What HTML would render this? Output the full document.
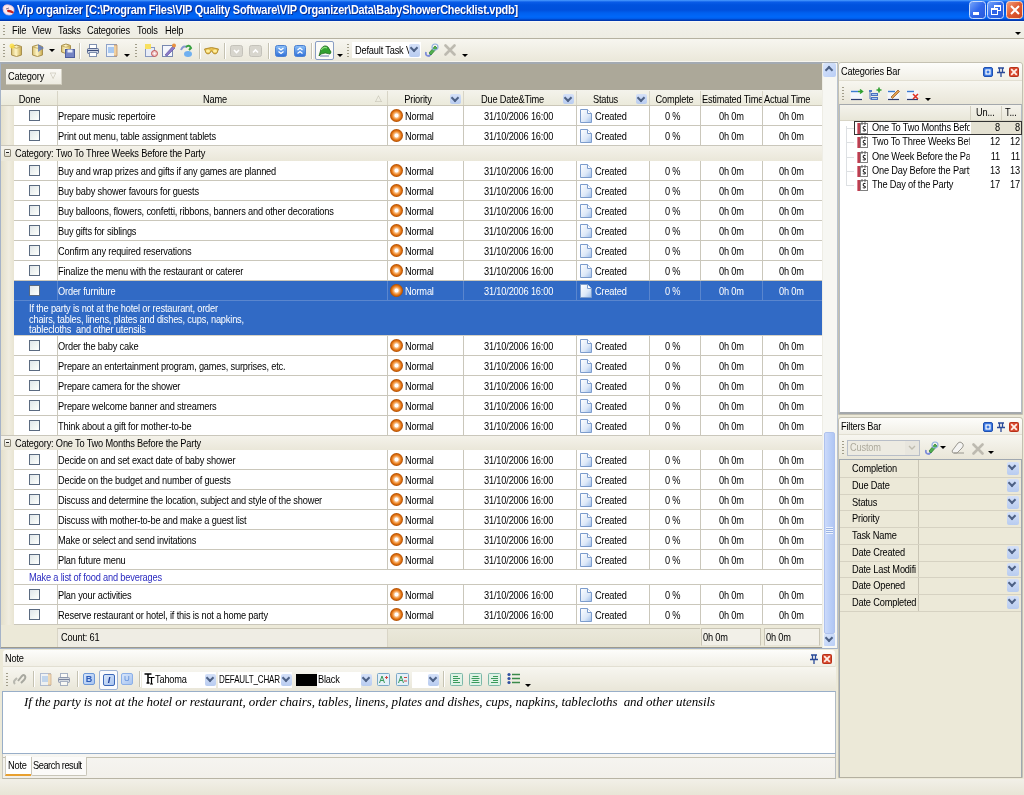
<!DOCTYPE html><html><head><meta charset="utf-8"><style>
*{margin:0;padding:0;box-sizing:border-box}
html,body{width:1024px;height:795px;overflow:hidden;background:#ECE9D8;font-family:"Liberation Sans",sans-serif;font-size:10px;color:#000}
.a{position:absolute}
.t{white-space:nowrap;letter-spacing:-0.2px;line-height:11px;font-size:10.5px;transform:scaleX(.88);transform-origin:0 0}
.grip{width:2px;background:repeating-linear-gradient(#A19D8A 0 1px,transparent 1px 3px)}
.sep{width:1px;background:#C5C2B2;border-right:1px solid #fff;width:2px}
.dd{width:0;height:0;border-left:3px solid transparent;border-right:3px solid transparent;border-top:3px solid #000}
.cb{width:11px;height:11px;border:1px solid #5A6A80;background:linear-gradient(135deg,#E0E6EA 0%,#F2F6F4 60%,#FFFFFF 100%)}
.pri{width:13px;height:13px;border-radius:50%;background:radial-gradient(circle at 50% 50%,#fff 0,#fff 1.6px,#F9C28E 2.4px,#EE8A2E 4px,#D4660A 5.2px,#A94A00 6.5px)}
.doc{width:11px;height:13px;background:linear-gradient(135deg,#FFFFFF 0%,#D6E4F7 50%,#A8C4EC 100%);border:1px solid #8CA8D8}
.hdd{width:11px;height:10px;background:linear-gradient(#D4E0F8,#B8CCF0);border-radius:2px}
.hdd:after{content:"";position:absolute;left:2px;top:1px;width:4px;height:4px;border-right:2px solid #4D6185;border-bottom:2px solid #4D6185;transform:rotate(45deg) }
.btn{border:1px solid #7F9DB9}
</style></head><body><div id="root" style="position:absolute;left:0;top:0;width:1024px;height:795px;will-change:transform">
<div class="a " style="left:0px;top:0px;width:1024px;height:21px;background:linear-gradient(#4A9CFF 0px,#2F7FF5 1px,#0A5CE8 2px,#0052DE 5px,#0050DC 10px,#0060F0 13px,#0068FA 17px,#005AE8 19px,#0038B0 20px,#0038B0 21px)"></div>
<svg class="a" style="left:1px;top:3px" width="15" height="14" viewBox="0 0 15 14"><path d="M2 5 Q3 1 8 2 Q13 3 13 7 Q13 12 8 12 Q2 12 2 5 Z" fill="#FBE8EE" stroke="#F0C0D0" stroke-width=".8"/><path d="M6 7 Q9 6 13 9 L12 10.5 Q9 9 6.5 9 Z" fill="#C02020"/><path d="M5 6 L8 5" stroke="#807090" stroke-width="1"/></svg>
<div class="a" style="left:17px;top:3px;color:#fff;font-weight:bold;font-size:12.5px;letter-spacing:-0.3px;transform:scaleX(.877);transform-origin:0 0;white-space:nowrap;text-shadow:1px 1px 0 #0A2A8A;line-height:14px">Vip organizer [C:\Program Files\VIP Quality Software\VIP Organizer\Data\BabyShowerChecklist.vpdb]</div>
<svg class="a" style="left:0px;top:0px" width="1" height="1" viewBox="0 0 1 1"><defs><linearGradient id="tbb" x1="0" y1="0" x2="1" y2="1"><stop offset="0" stop-color="#7AA8FA"/><stop offset=".5" stop-color="#3068EC"/><stop offset="1" stop-color="#2858D8"/></linearGradient><linearGradient id="tbr" x1="0" y1="0" x2="1" y2="1"><stop offset="0" stop-color="#F0A080"/><stop offset=".5" stop-color="#E05A30"/><stop offset="1" stop-color="#C84420"/></linearGradient></defs></svg>
<svg class="a" style="left:969px;top:1px" width="17" height="18" viewBox="0 0 17 18"><rect x=".5" y=".5" width="16" height="17" rx="3" fill="url(#tbb)" stroke="#C8DCFC"/><rect x="4" y="11" width="6" height="3" fill="#fff"/></svg>
<svg class="a" style="left:987px;top:1px" width="17" height="18" viewBox="0 0 17 18"><rect x=".5" y=".5" width="16" height="17" rx="3" fill="url(#tbb)" stroke="#C8DCFC"/><rect x="7.5" y="4.5" width="6" height="5" fill="none" stroke="#fff"/><rect x="7" y="4" width="7" height="2" fill="#fff"/><rect x="4.5" y="7.5" width="6" height="6" fill="#2E62E8" stroke="#fff"/><rect x="4" y="7" width="7" height="2" fill="#fff"/></svg>
<svg class="a" style="left:1006px;top:1px" width="17" height="18" viewBox="0 0 17 18"><rect x=".5" y=".5" width="16" height="17" rx="3" fill="url(#tbr)" stroke="#F8D8C8"/><path d="M5 5 L13 13 M13 5 L5 13" stroke="#fff" stroke-width="2"/></svg>
<div class="a " style="left:0px;top:21px;width:1024px;height:18px;background:linear-gradient(#FFFFFF 0px,#F2F1EA 1px,#EEEDE3 100%);border-bottom:1px solid #B5B1A0"></div>
<div class="a grip" style="left:3px;top:25px;width:2px;height:11px;"></div>
<div class="a t" style="left:12px;top:25px;">File</div>
<div class="a t" style="left:32px;top:25px;">View</div>
<div class="a t" style="left:58px;top:25px;">Tasks</div>
<div class="a t" style="left:87px;top:25px;">Categories</div>
<div class="a t" style="left:137px;top:25px;">Tools</div>
<div class="a t" style="left:165px;top:25px;">Help</div>
<div class="a dd" style="left:1015px;top:32px;width:0px;height:0px;"></div>
<div class="a " style="left:0px;top:39px;width:1024px;height:23px;background:linear-gradient(#F7F6F0,#EAE7D9)"></div>
<div class="a grip" style="left:3px;top:44px;width:2px;height:14px;"></div>
<svg class="a" style="left:0px;top:0px" width="1" height="1" viewBox="0 0 1 1"><defs><linearGradient id="dbg" x1="0" x2="1"><stop offset="0" stop-color="#D8C070"/><stop offset=".45" stop-color="#FFF6C8"/><stop offset="1" stop-color="#C8A848"/></linearGradient></defs></svg>
<svg class="a" style="left:11px;top:44px" width="12" height="14" viewBox="0 0 12 14"><path d="M0.5 2.5 Q5.5 -0.5 10.5 2.5 L10.5 11 Q5.5 14 0.5 11 Z" fill="url(#dbg)" stroke="#A89050" stroke-width="1"/><path d="M1 3 Q5.5 5.5 10 3" fill="none" stroke="#C8B068" stroke-width="1"/></svg>
<svg class="a" style="left:9px;top:43px" width="6" height="6" viewBox="0 0 6 6"><circle cx="3" cy="3" r="2.5" fill="#FFE040" opacity=".8"/></svg>
<svg class="a" style="left:32px;top:44px" width="12" height="14" viewBox="0 0 12 14"><path d="M0.5 2.5 Q5.5 -0.5 10.5 2.5 L10.5 11 Q5.5 14 0.5 11 Z" fill="url(#dbg)" stroke="#A89050" stroke-width="1"/><path d="M1 3 Q5.5 5.5 10 3" fill="none" stroke="#C8B068" stroke-width="1"/></svg>
<svg class="a" style="left:38px;top:44px" width="6" height="8" viewBox="0 0 6 8"><path d="M0 0 L6 4 L0 8 Z" fill="#5A78C0" opacity=".8"/></svg>
<div class="a dd" style="left:49px;top:49px;width:0px;height:0px;"></div>
<svg class="a" style="left:61px;top:43px" width="11" height="12" viewBox="0 0 11 12"><path d="M0.5 2.5 Q5.0 -0.5 9.5 2.5 L9.5 9 Q5.0 12 0.5 9 Z" fill="url(#dbg)" stroke="#A89050" stroke-width="1"/><path d="M1 3 Q5.0 5.5 9 3" fill="none" stroke="#C8B068" stroke-width="1"/></svg>
<svg class="a" style="left:65px;top:49px" width="10" height="9" viewBox="0 0 10 9"><rect x=".5" y=".5" width="9" height="8" fill="#7484C4" stroke="#4C5C9C"/><rect x="2.5" y="0.5" width="5" height="3" fill="#E8ECF8"/></svg>
<div class="a sep" style="left:79px;top:43px;width:2px;height:16px;"></div>
<svg class="a" style="left:87px;top:44px" width="12" height="13" viewBox="0 0 12 13"><rect x="2.5" y="0.5" width="7" height="4" fill="#fff" stroke="#8090B0"/><rect x="0.5" y="4.5" width="11" height="5" rx="1" fill="#C8D0E0" stroke="#5A6A90"/><rect x="2.5" y="8.5" width="7" height="4" fill="#fff" stroke="#8090B0"/><line x1="1" y1="6.5" x2="11" y2="6.5" stroke="#3A4A78"/></svg>
<svg class="a" style="left:106px;top:44px" width="12" height="13" viewBox="0 0 12 13"><rect x="0.5" y="0.5" width="10" height="12" fill="#EEF3FA" stroke="#8EA2C8"/><rect x="2" y="3" width="6" height="6" fill="#A8C8F0"/><path d="M8 1 L11 1 L11 12 L8 12" fill="#F0D0A0" stroke="#C09060" stroke-width=".8"/></svg>
<div class="a dd" style="left:124px;top:54px;width:0px;height:0px;"></div>
<div class="a grip" style="left:135px;top:44px;width:2px;height:14px;"></div>
<svg class="a" style="left:145px;top:44px" width="13" height="13" viewBox="0 0 13 13"><rect x="0.5" y="3.5" width="9" height="9" fill="#E8ECF6" stroke="#8898C0"/><rect x="0" y="0" width="6" height="5" fill="#F8E060"/><circle cx="9.5" cy="9.5" r="3" fill="#F0C8C8" stroke="#C05050"/><circle cx="9.5" cy="9.5" r="1" fill="#fff"/></svg>
<svg class="a" style="left:162px;top:43px" width="14" height="14" viewBox="0 0 14 14"><rect x="0.5" y="2.5" width="10" height="11" fill="#F4F6FC" stroke="#7888B0"/><path d="M3 12 L11 3 L13 5 L5 13 Z" fill="#8A7AC8" stroke="#5A4A98" stroke-width=".6"/><circle cx="12" cy="2.5" r="2" fill="#E89040"/></svg>
<svg class="a" style="left:180px;top:44px" width="14" height="13" viewBox="0 0 14 13"><path d="M1 6 Q3 1 7 3" fill="none" stroke="#8898D0" stroke-width="2"/><path d="M6 3 Q9 0 11 4 L9 6" fill="none" stroke="#38A040" stroke-width="2"/><ellipse cx="8" cy="10" rx="4" ry="3" fill="#70B0F0"/></svg>
<div class="a sep" style="left:199px;top:43px;width:2px;height:16px;"></div>
<svg class="a" style="left:204px;top:46px" width="15" height="9" viewBox="0 0 15 9"><path d="M0.5 3 Q7.5 0 14.5 3 L13 7 Q11 9 9 7 L8 5 L7 5 L6 7 Q4 9 2 7 Z" fill="#E8C050" stroke="#A88020" stroke-width=".8"/><ellipse cx="4" cy="5" rx="2" ry="1.5" fill="#FFF0A0"/><ellipse cx="11" cy="5" rx="2" ry="1.5" fill="#FFF0A0"/></svg>
<div class="a sep" style="left:224px;top:43px;width:2px;height:16px;"></div>
<svg class="a" style="left:230px;top:45px" width="13" height="12" viewBox="0 0 13 12"><rect x=".5" y=".5" width="12" height="11" rx="2" fill="#D8D6CE" stroke="#C4C2BA"/><path d="M4 5 L6.5 7.5 L9 5" fill="none" stroke="#fff" stroke-width="1.6"/></svg>
<svg class="a" style="left:249px;top:45px" width="13" height="12" viewBox="0 0 13 12"><rect x=".5" y=".5" width="12" height="11" rx="2" fill="#D8D6CE" stroke="#C4C2BA"/><path d="M4 7.5 L6.5 5 L9 7.5" fill="none" stroke="#fff" stroke-width="1.6"/></svg>
<div class="a sep" style="left:268px;top:43px;width:2px;height:16px;"></div>
<svg class="a" style="left:0px;top:0px" width="1" height="1" viewBox="0 0 1 1"><defs><linearGradient id="blg" x1="0" y1="0" x2="0" y2="1"><stop offset="0" stop-color="#8CC0F8"/><stop offset="1" stop-color="#3070D8"/></linearGradient></defs></svg>
<svg class="a" style="left:275px;top:45px" width="12" height="12" viewBox="0 0 12 12"><rect x=".5" y=".5" width="11" height="11" rx="2" fill="url(#blg)" stroke="#4C80D0"/><path d="M3.5 3 L6 5 L8.5 3 M3.5 6.5 L6 8.5 L8.5 6.5" fill="none" stroke="#fff" stroke-width="1.3"/></svg>
<svg class="a" style="left:294px;top:45px" width="12" height="12" viewBox="0 0 12 12"><rect x=".5" y=".5" width="11" height="11" rx="2" fill="url(#blg)" stroke="#4C80D0"/><path d="M3.5 5 L6 3 L8.5 5 M3.5 8.5 L6 6.5 L8.5 8.5" fill="none" stroke="#fff" stroke-width="1.3"/></svg>
<div class="a sep" style="left:311px;top:43px;width:2px;height:16px;"></div>
<div class="a " style="left:315px;top:41px;width:19px;height:19px;border:1px solid #8A9EC4;border-radius:2px;background:#FBFBF8"></div>
<svg class="a" style="left:318px;top:44px" width="14" height="14" viewBox="0 0 14 14"><path d="M1 12 L3 5 Q6 0 10 3 L13 8 L12 10 Q7 8 3 10 Z" fill="#30A030" stroke="#1A6A1A" stroke-width=".8"/><path d="M3 6 Q6 2 9 4" fill="none" stroke="#90E080" stroke-width="1.2"/><path d="M2 12 L11 12" stroke="#8090B8" stroke-width="1.2"/></svg>
<div class="a dd" style="left:337px;top:54px;width:0px;height:0px;"></div>
<div class="a grip" style="left:347px;top:44px;width:2px;height:14px;"></div>
<div class="a " style="left:352px;top:42px;width:69px;height:16px;background:#fff"></div>
<div class="a t" style="left:355px;top:45px;">Default Task V</div>
<div class="a hdd" style="left:409px;top:44px;width:11px;height:13px;"></div>
<svg class="a" style="left:424px;top:43px" width="15" height="15" viewBox="0 0 15 15"><path d="M2 9 Q1 13 5 13 L7 11" fill="none" stroke="#7C8CD8" stroke-width="1.8"/><path d="M5 10 L11 3 L13 5 L7 12 Z" fill="#50B050" stroke="#2A7A2A" stroke-width=".7"/><circle cx="11" cy="4" r="3" fill="none" stroke="#90B0E0" stroke-width="1.2"/></svg>
<svg class="a" style="left:444px;top:44px" width="12" height="12" viewBox="0 0 12 12"><path d="M1.5 1.5 L10.5 10.5 M10.5 1.5 L1.5 10.5" stroke="#BDBAB0" stroke-width="2.6" stroke-linecap="round"/></svg>
<div class="a dd" style="left:462px;top:54px;width:0px;height:0px;"></div>
<div class="a " style="left:0px;top:62px;width:838px;height:587px;background:#fff;border:1px solid #A5B3C8;border-top:2px solid #A3AAB2;border-right-color:#B8C2D0"></div>
<div class="a " style="left:0px;top:61px;width:838px;height:1px;background:#F6F5EF"></div>
<div class="a " style="left:1px;top:64px;width:821px;height:26px;background:#ACA899"></div>
<div class="a " style="left:6px;top:69px;width:56px;height:16px;background:linear-gradient(#FBFAF6,#EDEBE1);border-right:1px solid #D6D3C6;border-bottom:1px solid #C9C5B5"></div>
<div class="a t" style="left:8px;top:71px;">Category</div>
<div class="a" style="left:50px;top:72px;font-size:8px;color:#BDB9A8;line-height:8px">&#x25BD;</div>
<div class="a " style="left:1px;top:90px;width:821px;height:16px;background:linear-gradient(#F4F3EC,#EBEADB);border-bottom:1px solid #CBC7B8"></div>
<div class="a " style="left:57px;top:91px;width:1px;height:14px;background:#D8D5C6"></div>
<div class="a " style="left:387px;top:91px;width:1px;height:14px;background:#D8D5C6"></div>
<div class="a " style="left:463px;top:91px;width:1px;height:14px;background:#D8D5C6"></div>
<div class="a " style="left:576px;top:91px;width:1px;height:14px;background:#D8D5C6"></div>
<div class="a " style="left:649px;top:91px;width:1px;height:14px;background:#D8D5C6"></div>
<div class="a " style="left:700px;top:91px;width:1px;height:14px;background:#D8D5C6"></div>
<div class="a " style="left:762px;top:91px;width:1px;height:14px;background:#D8D5C6"></div>
<div class="a t" style="left:2px;top:94px;width:62.50px;text-align:center">Done</div>
<div class="a t" style="left:57px;top:94px;width:359.09px;text-align:center">Name</div>
<div class="a" style="left:375px;top:93px;font-size:9px;color:#C2BFB0;line-height:10px">&#x25B3;</div>
<div class="a t" style="left:387px;top:94px;width:70.45px;text-align:center">Priority</div>
<div class="a hdd" style="left:450px;top:94px;width:11px;height:10px;"></div>
<div class="a t" style="left:463px;top:94px;width:112.50px;text-align:center">Due Date&amp;Time</div>
<div class="a hdd" style="left:563px;top:94px;width:11px;height:10px;"></div>
<div class="a t" style="left:576px;top:94px;width:67.05px;text-align:center">Status</div>
<div class="a hdd" style="left:636px;top:94px;width:11px;height:10px;"></div>
<div class="a t" style="left:649px;top:94px;width:57.95px;text-align:center">Complete</div>
<div class="a t" style="left:702px;top:94px;width:68.18px;overflow:hidden">Estimated Time</div>
<div class="a t" style="left:764px;top:94px;width:65.91px;overflow:hidden">Actual Time</div>
<svg class="a" style="left:0px;top:0px" width="1" height="1" viewBox="0 0 1 1"><defs><linearGradient id="docg" x1="0" y1="0" x2="1" y2="1"><stop offset="0" stop-color="#FFFFFF"/><stop offset=".6" stop-color="#DCE8F8"/><stop offset="1" stop-color="#9CBCE8"/></linearGradient></defs></svg>
<div class="a " style="left:1px;top:106px;width:13px;height:519px;background:linear-gradient(90deg,#E4E0CC,#F0EDE0 60%,#E8E4D2)"></div>
<div class="a " style="left:14px;top:106px;width:808px;height:20px;background:#fff;border-bottom:1px solid #CAC7BB"></div>
<div class="a " style="left:57px;top:106px;width:1px;height:19px;background:#CAC7BB"></div>
<div class="a " style="left:387px;top:106px;width:1px;height:19px;background:#CAC7BB"></div>
<div class="a " style="left:463px;top:106px;width:1px;height:19px;background:#CAC7BB"></div>
<div class="a " style="left:576px;top:106px;width:1px;height:19px;background:#CAC7BB"></div>
<div class="a " style="left:649px;top:106px;width:1px;height:19px;background:#CAC7BB"></div>
<div class="a " style="left:700px;top:106px;width:1px;height:19px;background:#CAC7BB"></div>
<div class="a " style="left:762px;top:106px;width:1px;height:19px;background:#CAC7BB"></div>
<div class="a cb" style="left:29px;top:110px;width:11px;height:11px;"></div>
<div class="a t" style="left:58px;top:111px;color:#000">Prepare music repertoire</div>
<div class="a pri" style="left:390px;top:109px;width:13px;height:13px;"></div>
<div class="a t" style="left:405px;top:111px;color:#000">Normal</div>
<div class="a t" style="left:484px;top:111px;color:#000">31/10/2006 16:00</div>
<svg class="a" style="left:580px;top:109px" width="12" height="14" viewBox="0 0 12 14"><path d="M0.5 0.5 H7.5 L11.5 4.5 V13.5 H0.5 Z" fill="url(#docg)" stroke="#7C9CCC"/><path d="M7.5 0.5 V4.5 H11.5" fill="#fff" stroke="#7C9CCC"/></svg>
<div class="a t" style="left:595px;top:111px;color:#000">Created</div>
<div class="a t" style="left:665px;top:111px;color:#000">0 %</div>
<div class="a t" style="left:719px;top:111px;color:#000">0h 0m</div>
<div class="a t" style="left:779px;top:111px;color:#000">0h 0m</div>
<div class="a " style="left:14px;top:126px;width:808px;height:20px;background:#fff;border-bottom:1px solid #CAC7BB"></div>
<div class="a " style="left:57px;top:126px;width:1px;height:19px;background:#CAC7BB"></div>
<div class="a " style="left:387px;top:126px;width:1px;height:19px;background:#CAC7BB"></div>
<div class="a " style="left:463px;top:126px;width:1px;height:19px;background:#CAC7BB"></div>
<div class="a " style="left:576px;top:126px;width:1px;height:19px;background:#CAC7BB"></div>
<div class="a " style="left:649px;top:126px;width:1px;height:19px;background:#CAC7BB"></div>
<div class="a " style="left:700px;top:126px;width:1px;height:19px;background:#CAC7BB"></div>
<div class="a " style="left:762px;top:126px;width:1px;height:19px;background:#CAC7BB"></div>
<div class="a cb" style="left:29px;top:130px;width:11px;height:11px;"></div>
<div class="a t" style="left:58px;top:131px;color:#000">Print out menu, table assignment tablets</div>
<div class="a pri" style="left:390px;top:129px;width:13px;height:13px;"></div>
<div class="a t" style="left:405px;top:131px;color:#000">Normal</div>
<div class="a t" style="left:484px;top:131px;color:#000">31/10/2006 16:00</div>
<svg class="a" style="left:580px;top:129px" width="12" height="14" viewBox="0 0 12 14"><path d="M0.5 0.5 H7.5 L11.5 4.5 V13.5 H0.5 Z" fill="url(#docg)" stroke="#7C9CCC"/><path d="M7.5 0.5 V4.5 H11.5" fill="#fff" stroke="#7C9CCC"/></svg>
<div class="a t" style="left:595px;top:131px;color:#000">Created</div>
<div class="a t" style="left:665px;top:131px;color:#000">0 %</div>
<div class="a t" style="left:719px;top:131px;color:#000">0h 0m</div>
<div class="a t" style="left:779px;top:131px;color:#000">0h 0m</div>
<div class="a " style="left:1px;top:145px;width:821px;height:1px;background:#CAC7BB"></div>
<div class="a " style="left:1px;top:146px;width:821px;height:15px;background:linear-gradient(#F4F2EA,#EAE7D9)"></div>
<div class="a " style="left:4px;top:149px;width:7px;height:8px;border:1px solid #8C8878;border-radius:1px;background:linear-gradient(#fff,#DCD8C8)"></div>
<div class="a " style="left:6px;top:152px;width:3px;height:1px;background:#222"></div>
<div class="a t" style="left:15px;top:148px;">Category: Two To Three Weeks Before the Party</div>
<div class="a " style="left:14px;top:161px;width:808px;height:20px;background:#fff;border-bottom:1px solid #CAC7BB"></div>
<div class="a " style="left:57px;top:161px;width:1px;height:19px;background:#CAC7BB"></div>
<div class="a " style="left:387px;top:161px;width:1px;height:19px;background:#CAC7BB"></div>
<div class="a " style="left:463px;top:161px;width:1px;height:19px;background:#CAC7BB"></div>
<div class="a " style="left:576px;top:161px;width:1px;height:19px;background:#CAC7BB"></div>
<div class="a " style="left:649px;top:161px;width:1px;height:19px;background:#CAC7BB"></div>
<div class="a " style="left:700px;top:161px;width:1px;height:19px;background:#CAC7BB"></div>
<div class="a " style="left:762px;top:161px;width:1px;height:19px;background:#CAC7BB"></div>
<div class="a cb" style="left:29px;top:165px;width:11px;height:11px;"></div>
<div class="a t" style="left:58px;top:166px;color:#000">Buy and wrap prizes and gifts if any games are planned</div>
<div class="a pri" style="left:390px;top:164px;width:13px;height:13px;"></div>
<div class="a t" style="left:405px;top:166px;color:#000">Normal</div>
<div class="a t" style="left:484px;top:166px;color:#000">31/10/2006 16:00</div>
<svg class="a" style="left:580px;top:164px" width="12" height="14" viewBox="0 0 12 14"><path d="M0.5 0.5 H7.5 L11.5 4.5 V13.5 H0.5 Z" fill="url(#docg)" stroke="#7C9CCC"/><path d="M7.5 0.5 V4.5 H11.5" fill="#fff" stroke="#7C9CCC"/></svg>
<div class="a t" style="left:595px;top:166px;color:#000">Created</div>
<div class="a t" style="left:665px;top:166px;color:#000">0 %</div>
<div class="a t" style="left:719px;top:166px;color:#000">0h 0m</div>
<div class="a t" style="left:779px;top:166px;color:#000">0h 0m</div>
<div class="a " style="left:14px;top:181px;width:808px;height:20px;background:#fff;border-bottom:1px solid #CAC7BB"></div>
<div class="a " style="left:57px;top:181px;width:1px;height:19px;background:#CAC7BB"></div>
<div class="a " style="left:387px;top:181px;width:1px;height:19px;background:#CAC7BB"></div>
<div class="a " style="left:463px;top:181px;width:1px;height:19px;background:#CAC7BB"></div>
<div class="a " style="left:576px;top:181px;width:1px;height:19px;background:#CAC7BB"></div>
<div class="a " style="left:649px;top:181px;width:1px;height:19px;background:#CAC7BB"></div>
<div class="a " style="left:700px;top:181px;width:1px;height:19px;background:#CAC7BB"></div>
<div class="a " style="left:762px;top:181px;width:1px;height:19px;background:#CAC7BB"></div>
<div class="a cb" style="left:29px;top:185px;width:11px;height:11px;"></div>
<div class="a t" style="left:58px;top:186px;color:#000">Buy baby shower favours for guests</div>
<div class="a pri" style="left:390px;top:184px;width:13px;height:13px;"></div>
<div class="a t" style="left:405px;top:186px;color:#000">Normal</div>
<div class="a t" style="left:484px;top:186px;color:#000">31/10/2006 16:00</div>
<svg class="a" style="left:580px;top:184px" width="12" height="14" viewBox="0 0 12 14"><path d="M0.5 0.5 H7.5 L11.5 4.5 V13.5 H0.5 Z" fill="url(#docg)" stroke="#7C9CCC"/><path d="M7.5 0.5 V4.5 H11.5" fill="#fff" stroke="#7C9CCC"/></svg>
<div class="a t" style="left:595px;top:186px;color:#000">Created</div>
<div class="a t" style="left:665px;top:186px;color:#000">0 %</div>
<div class="a t" style="left:719px;top:186px;color:#000">0h 0m</div>
<div class="a t" style="left:779px;top:186px;color:#000">0h 0m</div>
<div class="a " style="left:14px;top:201px;width:808px;height:20px;background:#fff;border-bottom:1px solid #CAC7BB"></div>
<div class="a " style="left:57px;top:201px;width:1px;height:19px;background:#CAC7BB"></div>
<div class="a " style="left:387px;top:201px;width:1px;height:19px;background:#CAC7BB"></div>
<div class="a " style="left:463px;top:201px;width:1px;height:19px;background:#CAC7BB"></div>
<div class="a " style="left:576px;top:201px;width:1px;height:19px;background:#CAC7BB"></div>
<div class="a " style="left:649px;top:201px;width:1px;height:19px;background:#CAC7BB"></div>
<div class="a " style="left:700px;top:201px;width:1px;height:19px;background:#CAC7BB"></div>
<div class="a " style="left:762px;top:201px;width:1px;height:19px;background:#CAC7BB"></div>
<div class="a cb" style="left:29px;top:205px;width:11px;height:11px;"></div>
<div class="a t" style="left:58px;top:206px;color:#000">Buy balloons, flowers, confetti, ribbons, banners and other decorations</div>
<div class="a pri" style="left:390px;top:204px;width:13px;height:13px;"></div>
<div class="a t" style="left:405px;top:206px;color:#000">Normal</div>
<div class="a t" style="left:484px;top:206px;color:#000">31/10/2006 16:00</div>
<svg class="a" style="left:580px;top:204px" width="12" height="14" viewBox="0 0 12 14"><path d="M0.5 0.5 H7.5 L11.5 4.5 V13.5 H0.5 Z" fill="url(#docg)" stroke="#7C9CCC"/><path d="M7.5 0.5 V4.5 H11.5" fill="#fff" stroke="#7C9CCC"/></svg>
<div class="a t" style="left:595px;top:206px;color:#000">Created</div>
<div class="a t" style="left:665px;top:206px;color:#000">0 %</div>
<div class="a t" style="left:719px;top:206px;color:#000">0h 0m</div>
<div class="a t" style="left:779px;top:206px;color:#000">0h 0m</div>
<div class="a " style="left:14px;top:221px;width:808px;height:20px;background:#fff;border-bottom:1px solid #CAC7BB"></div>
<div class="a " style="left:57px;top:221px;width:1px;height:19px;background:#CAC7BB"></div>
<div class="a " style="left:387px;top:221px;width:1px;height:19px;background:#CAC7BB"></div>
<div class="a " style="left:463px;top:221px;width:1px;height:19px;background:#CAC7BB"></div>
<div class="a " style="left:576px;top:221px;width:1px;height:19px;background:#CAC7BB"></div>
<div class="a " style="left:649px;top:221px;width:1px;height:19px;background:#CAC7BB"></div>
<div class="a " style="left:700px;top:221px;width:1px;height:19px;background:#CAC7BB"></div>
<div class="a " style="left:762px;top:221px;width:1px;height:19px;background:#CAC7BB"></div>
<div class="a cb" style="left:29px;top:225px;width:11px;height:11px;"></div>
<div class="a t" style="left:58px;top:226px;color:#000">Buy gifts for siblings</div>
<div class="a pri" style="left:390px;top:224px;width:13px;height:13px;"></div>
<div class="a t" style="left:405px;top:226px;color:#000">Normal</div>
<div class="a t" style="left:484px;top:226px;color:#000">31/10/2006 16:00</div>
<svg class="a" style="left:580px;top:224px" width="12" height="14" viewBox="0 0 12 14"><path d="M0.5 0.5 H7.5 L11.5 4.5 V13.5 H0.5 Z" fill="url(#docg)" stroke="#7C9CCC"/><path d="M7.5 0.5 V4.5 H11.5" fill="#fff" stroke="#7C9CCC"/></svg>
<div class="a t" style="left:595px;top:226px;color:#000">Created</div>
<div class="a t" style="left:665px;top:226px;color:#000">0 %</div>
<div class="a t" style="left:719px;top:226px;color:#000">0h 0m</div>
<div class="a t" style="left:779px;top:226px;color:#000">0h 0m</div>
<div class="a " style="left:14px;top:241px;width:808px;height:20px;background:#fff;border-bottom:1px solid #CAC7BB"></div>
<div class="a " style="left:57px;top:241px;width:1px;height:19px;background:#CAC7BB"></div>
<div class="a " style="left:387px;top:241px;width:1px;height:19px;background:#CAC7BB"></div>
<div class="a " style="left:463px;top:241px;width:1px;height:19px;background:#CAC7BB"></div>
<div class="a " style="left:576px;top:241px;width:1px;height:19px;background:#CAC7BB"></div>
<div class="a " style="left:649px;top:241px;width:1px;height:19px;background:#CAC7BB"></div>
<div class="a " style="left:700px;top:241px;width:1px;height:19px;background:#CAC7BB"></div>
<div class="a " style="left:762px;top:241px;width:1px;height:19px;background:#CAC7BB"></div>
<div class="a cb" style="left:29px;top:245px;width:11px;height:11px;"></div>
<div class="a t" style="left:58px;top:246px;color:#000">Confirm any required reservations</div>
<div class="a pri" style="left:390px;top:244px;width:13px;height:13px;"></div>
<div class="a t" style="left:405px;top:246px;color:#000">Normal</div>
<div class="a t" style="left:484px;top:246px;color:#000">31/10/2006 16:00</div>
<svg class="a" style="left:580px;top:244px" width="12" height="14" viewBox="0 0 12 14"><path d="M0.5 0.5 H7.5 L11.5 4.5 V13.5 H0.5 Z" fill="url(#docg)" stroke="#7C9CCC"/><path d="M7.5 0.5 V4.5 H11.5" fill="#fff" stroke="#7C9CCC"/></svg>
<div class="a t" style="left:595px;top:246px;color:#000">Created</div>
<div class="a t" style="left:665px;top:246px;color:#000">0 %</div>
<div class="a t" style="left:719px;top:246px;color:#000">0h 0m</div>
<div class="a t" style="left:779px;top:246px;color:#000">0h 0m</div>
<div class="a " style="left:14px;top:261px;width:808px;height:20px;background:#fff;border-bottom:1px solid #CAC7BB"></div>
<div class="a " style="left:57px;top:261px;width:1px;height:19px;background:#CAC7BB"></div>
<div class="a " style="left:387px;top:261px;width:1px;height:19px;background:#CAC7BB"></div>
<div class="a " style="left:463px;top:261px;width:1px;height:19px;background:#CAC7BB"></div>
<div class="a " style="left:576px;top:261px;width:1px;height:19px;background:#CAC7BB"></div>
<div class="a " style="left:649px;top:261px;width:1px;height:19px;background:#CAC7BB"></div>
<div class="a " style="left:700px;top:261px;width:1px;height:19px;background:#CAC7BB"></div>
<div class="a " style="left:762px;top:261px;width:1px;height:19px;background:#CAC7BB"></div>
<div class="a cb" style="left:29px;top:265px;width:11px;height:11px;"></div>
<div class="a t" style="left:58px;top:266px;color:#000">Finalize the menu with the restaurant or caterer</div>
<div class="a pri" style="left:390px;top:264px;width:13px;height:13px;"></div>
<div class="a t" style="left:405px;top:266px;color:#000">Normal</div>
<div class="a t" style="left:484px;top:266px;color:#000">31/10/2006 16:00</div>
<svg class="a" style="left:580px;top:264px" width="12" height="14" viewBox="0 0 12 14"><path d="M0.5 0.5 H7.5 L11.5 4.5 V13.5 H0.5 Z" fill="url(#docg)" stroke="#7C9CCC"/><path d="M7.5 0.5 V4.5 H11.5" fill="#fff" stroke="#7C9CCC"/></svg>
<div class="a t" style="left:595px;top:266px;color:#000">Created</div>
<div class="a t" style="left:665px;top:266px;color:#000">0 %</div>
<div class="a t" style="left:719px;top:266px;color:#000">0h 0m</div>
<div class="a t" style="left:779px;top:266px;color:#000">0h 0m</div>
<div class="a " style="left:14px;top:281px;width:808px;height:20px;background:#316AC5;border-bottom:1px solid #5A86CE"></div>
<div class="a " style="left:57px;top:281px;width:1px;height:19px;background:#5A86CE"></div>
<div class="a " style="left:387px;top:281px;width:1px;height:19px;background:#5A86CE"></div>
<div class="a " style="left:463px;top:281px;width:1px;height:19px;background:#5A86CE"></div>
<div class="a " style="left:576px;top:281px;width:1px;height:19px;background:#5A86CE"></div>
<div class="a " style="left:649px;top:281px;width:1px;height:19px;background:#5A86CE"></div>
<div class="a " style="left:700px;top:281px;width:1px;height:19px;background:#5A86CE"></div>
<div class="a " style="left:762px;top:281px;width:1px;height:19px;background:#5A86CE"></div>
<div class="a cb" style="left:29px;top:285px;width:11px;height:11px;"></div>
<div class="a t" style="left:58px;top:286px;color:#fff">Order furniture</div>
<div class="a pri" style="left:390px;top:284px;width:13px;height:13px;"></div>
<div class="a t" style="left:405px;top:286px;color:#fff">Normal</div>
<div class="a t" style="left:484px;top:286px;color:#fff">31/10/2006 16:00</div>
<svg class="a" style="left:580px;top:284px" width="12" height="14" viewBox="0 0 12 14"><path d="M0.5 0.5 H7.5 L11.5 4.5 V13.5 H0.5 Z" fill="url(#docg)" stroke="#7C9CCC"/><path d="M7.5 0.5 V4.5 H11.5" fill="#fff" stroke="#7C9CCC"/></svg>
<div class="a t" style="left:595px;top:286px;color:#fff">Created</div>
<div class="a t" style="left:665px;top:286px;color:#fff">0 %</div>
<div class="a t" style="left:719px;top:286px;color:#fff">0h 0m</div>
<div class="a t" style="left:779px;top:286px;color:#fff">0h 0m</div>
<div class="a " style="left:14px;top:301px;width:808px;height:35px;background:#316AC5;border-bottom:1px solid #D5D2C6"></div>
<div class="a t" style="left:29px;top:303px;color:#fff;line-height:10.6px">If the party is not at the hotel or restaurant, order<br>chairs, tables, linens, plates and dishes, cups, napkins,<br>tablecloths&nbsp; and other utensils</div>
<div class="a " style="left:14px;top:336px;width:808px;height:20px;background:#fff;border-bottom:1px solid #CAC7BB"></div>
<div class="a " style="left:57px;top:336px;width:1px;height:19px;background:#CAC7BB"></div>
<div class="a " style="left:387px;top:336px;width:1px;height:19px;background:#CAC7BB"></div>
<div class="a " style="left:463px;top:336px;width:1px;height:19px;background:#CAC7BB"></div>
<div class="a " style="left:576px;top:336px;width:1px;height:19px;background:#CAC7BB"></div>
<div class="a " style="left:649px;top:336px;width:1px;height:19px;background:#CAC7BB"></div>
<div class="a " style="left:700px;top:336px;width:1px;height:19px;background:#CAC7BB"></div>
<div class="a " style="left:762px;top:336px;width:1px;height:19px;background:#CAC7BB"></div>
<div class="a cb" style="left:29px;top:340px;width:11px;height:11px;"></div>
<div class="a t" style="left:58px;top:341px;color:#000">Order the baby cake</div>
<div class="a pri" style="left:390px;top:339px;width:13px;height:13px;"></div>
<div class="a t" style="left:405px;top:341px;color:#000">Normal</div>
<div class="a t" style="left:484px;top:341px;color:#000">31/10/2006 16:00</div>
<svg class="a" style="left:580px;top:339px" width="12" height="14" viewBox="0 0 12 14"><path d="M0.5 0.5 H7.5 L11.5 4.5 V13.5 H0.5 Z" fill="url(#docg)" stroke="#7C9CCC"/><path d="M7.5 0.5 V4.5 H11.5" fill="#fff" stroke="#7C9CCC"/></svg>
<div class="a t" style="left:595px;top:341px;color:#000">Created</div>
<div class="a t" style="left:665px;top:341px;color:#000">0 %</div>
<div class="a t" style="left:719px;top:341px;color:#000">0h 0m</div>
<div class="a t" style="left:779px;top:341px;color:#000">0h 0m</div>
<div class="a " style="left:14px;top:356px;width:808px;height:20px;background:#fff;border-bottom:1px solid #CAC7BB"></div>
<div class="a " style="left:57px;top:356px;width:1px;height:19px;background:#CAC7BB"></div>
<div class="a " style="left:387px;top:356px;width:1px;height:19px;background:#CAC7BB"></div>
<div class="a " style="left:463px;top:356px;width:1px;height:19px;background:#CAC7BB"></div>
<div class="a " style="left:576px;top:356px;width:1px;height:19px;background:#CAC7BB"></div>
<div class="a " style="left:649px;top:356px;width:1px;height:19px;background:#CAC7BB"></div>
<div class="a " style="left:700px;top:356px;width:1px;height:19px;background:#CAC7BB"></div>
<div class="a " style="left:762px;top:356px;width:1px;height:19px;background:#CAC7BB"></div>
<div class="a cb" style="left:29px;top:360px;width:11px;height:11px;"></div>
<div class="a t" style="left:58px;top:361px;color:#000">Prepare an entertainment program, games, surprises, etc.</div>
<div class="a pri" style="left:390px;top:359px;width:13px;height:13px;"></div>
<div class="a t" style="left:405px;top:361px;color:#000">Normal</div>
<div class="a t" style="left:484px;top:361px;color:#000">31/10/2006 16:00</div>
<svg class="a" style="left:580px;top:359px" width="12" height="14" viewBox="0 0 12 14"><path d="M0.5 0.5 H7.5 L11.5 4.5 V13.5 H0.5 Z" fill="url(#docg)" stroke="#7C9CCC"/><path d="M7.5 0.5 V4.5 H11.5" fill="#fff" stroke="#7C9CCC"/></svg>
<div class="a t" style="left:595px;top:361px;color:#000">Created</div>
<div class="a t" style="left:665px;top:361px;color:#000">0 %</div>
<div class="a t" style="left:719px;top:361px;color:#000">0h 0m</div>
<div class="a t" style="left:779px;top:361px;color:#000">0h 0m</div>
<div class="a " style="left:14px;top:376px;width:808px;height:20px;background:#fff;border-bottom:1px solid #CAC7BB"></div>
<div class="a " style="left:57px;top:376px;width:1px;height:19px;background:#CAC7BB"></div>
<div class="a " style="left:387px;top:376px;width:1px;height:19px;background:#CAC7BB"></div>
<div class="a " style="left:463px;top:376px;width:1px;height:19px;background:#CAC7BB"></div>
<div class="a " style="left:576px;top:376px;width:1px;height:19px;background:#CAC7BB"></div>
<div class="a " style="left:649px;top:376px;width:1px;height:19px;background:#CAC7BB"></div>
<div class="a " style="left:700px;top:376px;width:1px;height:19px;background:#CAC7BB"></div>
<div class="a " style="left:762px;top:376px;width:1px;height:19px;background:#CAC7BB"></div>
<div class="a cb" style="left:29px;top:380px;width:11px;height:11px;"></div>
<div class="a t" style="left:58px;top:381px;color:#000">Prepare camera for the shower</div>
<div class="a pri" style="left:390px;top:379px;width:13px;height:13px;"></div>
<div class="a t" style="left:405px;top:381px;color:#000">Normal</div>
<div class="a t" style="left:484px;top:381px;color:#000">31/10/2006 16:00</div>
<svg class="a" style="left:580px;top:379px" width="12" height="14" viewBox="0 0 12 14"><path d="M0.5 0.5 H7.5 L11.5 4.5 V13.5 H0.5 Z" fill="url(#docg)" stroke="#7C9CCC"/><path d="M7.5 0.5 V4.5 H11.5" fill="#fff" stroke="#7C9CCC"/></svg>
<div class="a t" style="left:595px;top:381px;color:#000">Created</div>
<div class="a t" style="left:665px;top:381px;color:#000">0 %</div>
<div class="a t" style="left:719px;top:381px;color:#000">0h 0m</div>
<div class="a t" style="left:779px;top:381px;color:#000">0h 0m</div>
<div class="a " style="left:14px;top:396px;width:808px;height:20px;background:#fff;border-bottom:1px solid #CAC7BB"></div>
<div class="a " style="left:57px;top:396px;width:1px;height:19px;background:#CAC7BB"></div>
<div class="a " style="left:387px;top:396px;width:1px;height:19px;background:#CAC7BB"></div>
<div class="a " style="left:463px;top:396px;width:1px;height:19px;background:#CAC7BB"></div>
<div class="a " style="left:576px;top:396px;width:1px;height:19px;background:#CAC7BB"></div>
<div class="a " style="left:649px;top:396px;width:1px;height:19px;background:#CAC7BB"></div>
<div class="a " style="left:700px;top:396px;width:1px;height:19px;background:#CAC7BB"></div>
<div class="a " style="left:762px;top:396px;width:1px;height:19px;background:#CAC7BB"></div>
<div class="a cb" style="left:29px;top:400px;width:11px;height:11px;"></div>
<div class="a t" style="left:58px;top:401px;color:#000">Prepare welcome banner and streamers</div>
<div class="a pri" style="left:390px;top:399px;width:13px;height:13px;"></div>
<div class="a t" style="left:405px;top:401px;color:#000">Normal</div>
<div class="a t" style="left:484px;top:401px;color:#000">31/10/2006 16:00</div>
<svg class="a" style="left:580px;top:399px" width="12" height="14" viewBox="0 0 12 14"><path d="M0.5 0.5 H7.5 L11.5 4.5 V13.5 H0.5 Z" fill="url(#docg)" stroke="#7C9CCC"/><path d="M7.5 0.5 V4.5 H11.5" fill="#fff" stroke="#7C9CCC"/></svg>
<div class="a t" style="left:595px;top:401px;color:#000">Created</div>
<div class="a t" style="left:665px;top:401px;color:#000">0 %</div>
<div class="a t" style="left:719px;top:401px;color:#000">0h 0m</div>
<div class="a t" style="left:779px;top:401px;color:#000">0h 0m</div>
<div class="a " style="left:14px;top:416px;width:808px;height:20px;background:#fff;border-bottom:1px solid #CAC7BB"></div>
<div class="a " style="left:57px;top:416px;width:1px;height:19px;background:#CAC7BB"></div>
<div class="a " style="left:387px;top:416px;width:1px;height:19px;background:#CAC7BB"></div>
<div class="a " style="left:463px;top:416px;width:1px;height:19px;background:#CAC7BB"></div>
<div class="a " style="left:576px;top:416px;width:1px;height:19px;background:#CAC7BB"></div>
<div class="a " style="left:649px;top:416px;width:1px;height:19px;background:#CAC7BB"></div>
<div class="a " style="left:700px;top:416px;width:1px;height:19px;background:#CAC7BB"></div>
<div class="a " style="left:762px;top:416px;width:1px;height:19px;background:#CAC7BB"></div>
<div class="a cb" style="left:29px;top:420px;width:11px;height:11px;"></div>
<div class="a t" style="left:58px;top:421px;color:#000">Think about a gift for mother-to-be</div>
<div class="a pri" style="left:390px;top:419px;width:13px;height:13px;"></div>
<div class="a t" style="left:405px;top:421px;color:#000">Normal</div>
<div class="a t" style="left:484px;top:421px;color:#000">31/10/2006 16:00</div>
<svg class="a" style="left:580px;top:419px" width="12" height="14" viewBox="0 0 12 14"><path d="M0.5 0.5 H7.5 L11.5 4.5 V13.5 H0.5 Z" fill="url(#docg)" stroke="#7C9CCC"/><path d="M7.5 0.5 V4.5 H11.5" fill="#fff" stroke="#7C9CCC"/></svg>
<div class="a t" style="left:595px;top:421px;color:#000">Created</div>
<div class="a t" style="left:665px;top:421px;color:#000">0 %</div>
<div class="a t" style="left:719px;top:421px;color:#000">0h 0m</div>
<div class="a t" style="left:779px;top:421px;color:#000">0h 0m</div>
<div class="a " style="left:1px;top:435px;width:821px;height:1px;background:#CAC7BB"></div>
<div class="a " style="left:1px;top:436px;width:821px;height:14px;background:linear-gradient(#F4F2EA,#EAE7D9)"></div>
<div class="a " style="left:4px;top:439px;width:7px;height:8px;border:1px solid #8C8878;border-radius:1px;background:linear-gradient(#fff,#DCD8C8)"></div>
<div class="a " style="left:6px;top:442px;width:3px;height:1px;background:#222"></div>
<div class="a t" style="left:15px;top:438px;">Category: One To Two Months Before the Party</div>
<div class="a " style="left:14px;top:450px;width:808px;height:20px;background:#fff;border-bottom:1px solid #CAC7BB"></div>
<div class="a " style="left:57px;top:450px;width:1px;height:19px;background:#CAC7BB"></div>
<div class="a " style="left:387px;top:450px;width:1px;height:19px;background:#CAC7BB"></div>
<div class="a " style="left:463px;top:450px;width:1px;height:19px;background:#CAC7BB"></div>
<div class="a " style="left:576px;top:450px;width:1px;height:19px;background:#CAC7BB"></div>
<div class="a " style="left:649px;top:450px;width:1px;height:19px;background:#CAC7BB"></div>
<div class="a " style="left:700px;top:450px;width:1px;height:19px;background:#CAC7BB"></div>
<div class="a " style="left:762px;top:450px;width:1px;height:19px;background:#CAC7BB"></div>
<div class="a cb" style="left:29px;top:454px;width:11px;height:11px;"></div>
<div class="a t" style="left:58px;top:455px;color:#000">Decide on and set exact date of baby shower</div>
<div class="a pri" style="left:390px;top:453px;width:13px;height:13px;"></div>
<div class="a t" style="left:405px;top:455px;color:#000">Normal</div>
<div class="a t" style="left:484px;top:455px;color:#000">31/10/2006 16:00</div>
<svg class="a" style="left:580px;top:453px" width="12" height="14" viewBox="0 0 12 14"><path d="M0.5 0.5 H7.5 L11.5 4.5 V13.5 H0.5 Z" fill="url(#docg)" stroke="#7C9CCC"/><path d="M7.5 0.5 V4.5 H11.5" fill="#fff" stroke="#7C9CCC"/></svg>
<div class="a t" style="left:595px;top:455px;color:#000">Created</div>
<div class="a t" style="left:665px;top:455px;color:#000">0 %</div>
<div class="a t" style="left:719px;top:455px;color:#000">0h 0m</div>
<div class="a t" style="left:779px;top:455px;color:#000">0h 0m</div>
<div class="a " style="left:14px;top:470px;width:808px;height:20px;background:#fff;border-bottom:1px solid #CAC7BB"></div>
<div class="a " style="left:57px;top:470px;width:1px;height:19px;background:#CAC7BB"></div>
<div class="a " style="left:387px;top:470px;width:1px;height:19px;background:#CAC7BB"></div>
<div class="a " style="left:463px;top:470px;width:1px;height:19px;background:#CAC7BB"></div>
<div class="a " style="left:576px;top:470px;width:1px;height:19px;background:#CAC7BB"></div>
<div class="a " style="left:649px;top:470px;width:1px;height:19px;background:#CAC7BB"></div>
<div class="a " style="left:700px;top:470px;width:1px;height:19px;background:#CAC7BB"></div>
<div class="a " style="left:762px;top:470px;width:1px;height:19px;background:#CAC7BB"></div>
<div class="a cb" style="left:29px;top:474px;width:11px;height:11px;"></div>
<div class="a t" style="left:58px;top:475px;color:#000">Decide on the budget and number of guests</div>
<div class="a pri" style="left:390px;top:473px;width:13px;height:13px;"></div>
<div class="a t" style="left:405px;top:475px;color:#000">Normal</div>
<div class="a t" style="left:484px;top:475px;color:#000">31/10/2006 16:00</div>
<svg class="a" style="left:580px;top:473px" width="12" height="14" viewBox="0 0 12 14"><path d="M0.5 0.5 H7.5 L11.5 4.5 V13.5 H0.5 Z" fill="url(#docg)" stroke="#7C9CCC"/><path d="M7.5 0.5 V4.5 H11.5" fill="#fff" stroke="#7C9CCC"/></svg>
<div class="a t" style="left:595px;top:475px;color:#000">Created</div>
<div class="a t" style="left:665px;top:475px;color:#000">0 %</div>
<div class="a t" style="left:719px;top:475px;color:#000">0h 0m</div>
<div class="a t" style="left:779px;top:475px;color:#000">0h 0m</div>
<div class="a " style="left:14px;top:490px;width:808px;height:20px;background:#fff;border-bottom:1px solid #CAC7BB"></div>
<div class="a " style="left:57px;top:490px;width:1px;height:19px;background:#CAC7BB"></div>
<div class="a " style="left:387px;top:490px;width:1px;height:19px;background:#CAC7BB"></div>
<div class="a " style="left:463px;top:490px;width:1px;height:19px;background:#CAC7BB"></div>
<div class="a " style="left:576px;top:490px;width:1px;height:19px;background:#CAC7BB"></div>
<div class="a " style="left:649px;top:490px;width:1px;height:19px;background:#CAC7BB"></div>
<div class="a " style="left:700px;top:490px;width:1px;height:19px;background:#CAC7BB"></div>
<div class="a " style="left:762px;top:490px;width:1px;height:19px;background:#CAC7BB"></div>
<div class="a cb" style="left:29px;top:494px;width:11px;height:11px;"></div>
<div class="a t" style="left:58px;top:495px;color:#000">Discuss and determine the location, subject and style of the shower</div>
<div class="a pri" style="left:390px;top:493px;width:13px;height:13px;"></div>
<div class="a t" style="left:405px;top:495px;color:#000">Normal</div>
<div class="a t" style="left:484px;top:495px;color:#000">31/10/2006 16:00</div>
<svg class="a" style="left:580px;top:493px" width="12" height="14" viewBox="0 0 12 14"><path d="M0.5 0.5 H7.5 L11.5 4.5 V13.5 H0.5 Z" fill="url(#docg)" stroke="#7C9CCC"/><path d="M7.5 0.5 V4.5 H11.5" fill="#fff" stroke="#7C9CCC"/></svg>
<div class="a t" style="left:595px;top:495px;color:#000">Created</div>
<div class="a t" style="left:665px;top:495px;color:#000">0 %</div>
<div class="a t" style="left:719px;top:495px;color:#000">0h 0m</div>
<div class="a t" style="left:779px;top:495px;color:#000">0h 0m</div>
<div class="a " style="left:14px;top:510px;width:808px;height:20px;background:#fff;border-bottom:1px solid #CAC7BB"></div>
<div class="a " style="left:57px;top:510px;width:1px;height:19px;background:#CAC7BB"></div>
<div class="a " style="left:387px;top:510px;width:1px;height:19px;background:#CAC7BB"></div>
<div class="a " style="left:463px;top:510px;width:1px;height:19px;background:#CAC7BB"></div>
<div class="a " style="left:576px;top:510px;width:1px;height:19px;background:#CAC7BB"></div>
<div class="a " style="left:649px;top:510px;width:1px;height:19px;background:#CAC7BB"></div>
<div class="a " style="left:700px;top:510px;width:1px;height:19px;background:#CAC7BB"></div>
<div class="a " style="left:762px;top:510px;width:1px;height:19px;background:#CAC7BB"></div>
<div class="a cb" style="left:29px;top:514px;width:11px;height:11px;"></div>
<div class="a t" style="left:58px;top:515px;color:#000">Discuss with mother-to-be and make a guest list</div>
<div class="a pri" style="left:390px;top:513px;width:13px;height:13px;"></div>
<div class="a t" style="left:405px;top:515px;color:#000">Normal</div>
<div class="a t" style="left:484px;top:515px;color:#000">31/10/2006 16:00</div>
<svg class="a" style="left:580px;top:513px" width="12" height="14" viewBox="0 0 12 14"><path d="M0.5 0.5 H7.5 L11.5 4.5 V13.5 H0.5 Z" fill="url(#docg)" stroke="#7C9CCC"/><path d="M7.5 0.5 V4.5 H11.5" fill="#fff" stroke="#7C9CCC"/></svg>
<div class="a t" style="left:595px;top:515px;color:#000">Created</div>
<div class="a t" style="left:665px;top:515px;color:#000">0 %</div>
<div class="a t" style="left:719px;top:515px;color:#000">0h 0m</div>
<div class="a t" style="left:779px;top:515px;color:#000">0h 0m</div>
<div class="a " style="left:14px;top:530px;width:808px;height:20px;background:#fff;border-bottom:1px solid #CAC7BB"></div>
<div class="a " style="left:57px;top:530px;width:1px;height:19px;background:#CAC7BB"></div>
<div class="a " style="left:387px;top:530px;width:1px;height:19px;background:#CAC7BB"></div>
<div class="a " style="left:463px;top:530px;width:1px;height:19px;background:#CAC7BB"></div>
<div class="a " style="left:576px;top:530px;width:1px;height:19px;background:#CAC7BB"></div>
<div class="a " style="left:649px;top:530px;width:1px;height:19px;background:#CAC7BB"></div>
<div class="a " style="left:700px;top:530px;width:1px;height:19px;background:#CAC7BB"></div>
<div class="a " style="left:762px;top:530px;width:1px;height:19px;background:#CAC7BB"></div>
<div class="a cb" style="left:29px;top:534px;width:11px;height:11px;"></div>
<div class="a t" style="left:58px;top:535px;color:#000">Make or select and send invitations</div>
<div class="a pri" style="left:390px;top:533px;width:13px;height:13px;"></div>
<div class="a t" style="left:405px;top:535px;color:#000">Normal</div>
<div class="a t" style="left:484px;top:535px;color:#000">31/10/2006 16:00</div>
<svg class="a" style="left:580px;top:533px" width="12" height="14" viewBox="0 0 12 14"><path d="M0.5 0.5 H7.5 L11.5 4.5 V13.5 H0.5 Z" fill="url(#docg)" stroke="#7C9CCC"/><path d="M7.5 0.5 V4.5 H11.5" fill="#fff" stroke="#7C9CCC"/></svg>
<div class="a t" style="left:595px;top:535px;color:#000">Created</div>
<div class="a t" style="left:665px;top:535px;color:#000">0 %</div>
<div class="a t" style="left:719px;top:535px;color:#000">0h 0m</div>
<div class="a t" style="left:779px;top:535px;color:#000">0h 0m</div>
<div class="a " style="left:14px;top:550px;width:808px;height:20px;background:#fff;border-bottom:1px solid #CAC7BB"></div>
<div class="a " style="left:57px;top:550px;width:1px;height:19px;background:#CAC7BB"></div>
<div class="a " style="left:387px;top:550px;width:1px;height:19px;background:#CAC7BB"></div>
<div class="a " style="left:463px;top:550px;width:1px;height:19px;background:#CAC7BB"></div>
<div class="a " style="left:576px;top:550px;width:1px;height:19px;background:#CAC7BB"></div>
<div class="a " style="left:649px;top:550px;width:1px;height:19px;background:#CAC7BB"></div>
<div class="a " style="left:700px;top:550px;width:1px;height:19px;background:#CAC7BB"></div>
<div class="a " style="left:762px;top:550px;width:1px;height:19px;background:#CAC7BB"></div>
<div class="a cb" style="left:29px;top:554px;width:11px;height:11px;"></div>
<div class="a t" style="left:58px;top:555px;color:#000">Plan future menu</div>
<div class="a pri" style="left:390px;top:553px;width:13px;height:13px;"></div>
<div class="a t" style="left:405px;top:555px;color:#000">Normal</div>
<div class="a t" style="left:484px;top:555px;color:#000">31/10/2006 16:00</div>
<svg class="a" style="left:580px;top:553px" width="12" height="14" viewBox="0 0 12 14"><path d="M0.5 0.5 H7.5 L11.5 4.5 V13.5 H0.5 Z" fill="url(#docg)" stroke="#7C9CCC"/><path d="M7.5 0.5 V4.5 H11.5" fill="#fff" stroke="#7C9CCC"/></svg>
<div class="a t" style="left:595px;top:555px;color:#000">Created</div>
<div class="a t" style="left:665px;top:555px;color:#000">0 %</div>
<div class="a t" style="left:719px;top:555px;color:#000">0h 0m</div>
<div class="a t" style="left:779px;top:555px;color:#000">0h 0m</div>
<div class="a " style="left:14px;top:570px;width:808px;height:15px;background:#fff;border-bottom:1px solid #CAC7BB"></div>
<div class="a t" style="left:29px;top:572px;color:#2A2AC0">Make a list of food and beverages</div>
<div class="a " style="left:14px;top:585px;width:808px;height:20px;background:#fff;border-bottom:1px solid #CAC7BB"></div>
<div class="a " style="left:57px;top:585px;width:1px;height:19px;background:#CAC7BB"></div>
<div class="a " style="left:387px;top:585px;width:1px;height:19px;background:#CAC7BB"></div>
<div class="a " style="left:463px;top:585px;width:1px;height:19px;background:#CAC7BB"></div>
<div class="a " style="left:576px;top:585px;width:1px;height:19px;background:#CAC7BB"></div>
<div class="a " style="left:649px;top:585px;width:1px;height:19px;background:#CAC7BB"></div>
<div class="a " style="left:700px;top:585px;width:1px;height:19px;background:#CAC7BB"></div>
<div class="a " style="left:762px;top:585px;width:1px;height:19px;background:#CAC7BB"></div>
<div class="a cb" style="left:29px;top:589px;width:11px;height:11px;"></div>
<div class="a t" style="left:58px;top:590px;color:#000">Plan your activities</div>
<div class="a pri" style="left:390px;top:588px;width:13px;height:13px;"></div>
<div class="a t" style="left:405px;top:590px;color:#000">Normal</div>
<div class="a t" style="left:484px;top:590px;color:#000">31/10/2006 16:00</div>
<svg class="a" style="left:580px;top:588px" width="12" height="14" viewBox="0 0 12 14"><path d="M0.5 0.5 H7.5 L11.5 4.5 V13.5 H0.5 Z" fill="url(#docg)" stroke="#7C9CCC"/><path d="M7.5 0.5 V4.5 H11.5" fill="#fff" stroke="#7C9CCC"/></svg>
<div class="a t" style="left:595px;top:590px;color:#000">Created</div>
<div class="a t" style="left:665px;top:590px;color:#000">0 %</div>
<div class="a t" style="left:719px;top:590px;color:#000">0h 0m</div>
<div class="a t" style="left:779px;top:590px;color:#000">0h 0m</div>
<div class="a " style="left:14px;top:605px;width:808px;height:20px;background:#fff;border-bottom:1px solid #CAC7BB"></div>
<div class="a " style="left:57px;top:605px;width:1px;height:19px;background:#CAC7BB"></div>
<div class="a " style="left:387px;top:605px;width:1px;height:19px;background:#CAC7BB"></div>
<div class="a " style="left:463px;top:605px;width:1px;height:19px;background:#CAC7BB"></div>
<div class="a " style="left:576px;top:605px;width:1px;height:19px;background:#CAC7BB"></div>
<div class="a " style="left:649px;top:605px;width:1px;height:19px;background:#CAC7BB"></div>
<div class="a " style="left:700px;top:605px;width:1px;height:19px;background:#CAC7BB"></div>
<div class="a " style="left:762px;top:605px;width:1px;height:19px;background:#CAC7BB"></div>
<div class="a cb" style="left:29px;top:609px;width:11px;height:11px;"></div>
<div class="a t" style="left:58px;top:610px;color:#000">Reserve restaurant or hotel, if this is not a home party</div>
<div class="a pri" style="left:390px;top:608px;width:13px;height:13px;"></div>
<div class="a t" style="left:405px;top:610px;color:#000">Normal</div>
<div class="a t" style="left:484px;top:610px;color:#000">31/10/2006 16:00</div>
<svg class="a" style="left:580px;top:608px" width="12" height="14" viewBox="0 0 12 14"><path d="M0.5 0.5 H7.5 L11.5 4.5 V13.5 H0.5 Z" fill="url(#docg)" stroke="#7C9CCC"/><path d="M7.5 0.5 V4.5 H11.5" fill="#fff" stroke="#7C9CCC"/></svg>
<div class="a t" style="left:595px;top:610px;color:#000">Created</div>
<div class="a t" style="left:665px;top:610px;color:#000">0 %</div>
<div class="a t" style="left:719px;top:610px;color:#000">0h 0m</div>
<div class="a t" style="left:779px;top:610px;color:#000">0h 0m</div>
<div class="a " style="left:1px;top:625px;width:821px;height:23px;background:#ECE9D8;border-bottom:1px solid #9D9A8C"></div>
<div class="a " style="left:57px;top:628px;width:330px;height:19px;background:#EFEDE4;border-top:1px solid #C9C5B5;border-left:1px solid #D9D5C6"></div>
<div class="a t" style="left:61px;top:632px;">Count: 61</div>
<div class="a " style="left:387px;top:628px;width:313px;height:19px;background:linear-gradient(#EAE8DA,#E4E1D0);border-top:1px solid #C9C5B5;border-left:1px solid #D9D5C6"></div>
<div class="a " style="left:701px;top:628px;width:60px;height:18px;background:#F2F0E8;border:1px solid #C9C5B5;border-bottom-color:#E6E3D6"></div>
<div class="a t" style="left:703px;top:632px;">0h 0m</div>
<div class="a " style="left:764px;top:628px;width:56px;height:18px;background:#F2F0E8;border:1px solid #C9C5B5;border-bottom-color:#E6E3D6"></div>
<div class="a t" style="left:766px;top:632px;">0h 0m</div>
<div class="a " style="left:822px;top:63px;width:15px;height:585px;background:#F7F7F3;border-left:1px solid #EEEDE5"></div>
<div class="a " style="left:823px;top:63px;width:13px;height:14px;background:linear-gradient(135deg,#D9E5FB,#B8CDF6);border-radius:2px"></div>
<div class="a " style="left:826px;top:67px;width:6px;height:6px;border-left:2px solid #4D6185;border-top:2px solid #4D6185;transform:rotate(45deg)"></div>
<div class="a " style="left:824px;top:432px;width:11px;height:202px;background:linear-gradient(90deg,#CCDAFA,#BCD0F8 50%,#B0C6F4);border:1px solid #AFC2EE;border-radius:2px"></div>
<div class="a " style="left:826px;top:527px;width:7px;height:7px;background:repeating-linear-gradient(#EEF4FE 0 1px,#9CB4E4 1px 2px)"></div>
<div class="a " style="left:824px;top:634px;width:11px;height:12px;background:linear-gradient(135deg,#D9E5FB,#B8CDF6);border-radius:1px"></div>
<div class="a " style="left:826px;top:635px;width:6px;height:6px;border-right:2px solid #4D6185;border-bottom:2px solid #4D6185;transform:rotate(45deg)"></div>
<div class="a " style="left:838px;top:62px;width:186px;height:717px;background:#ECE9D8"></div>
<div class="a " style="left:838px;top:62px;width:185px;height:353px;background:#F1EFE6;border:1px solid #C4C1B2;border-radius:3px 3px 0 0"></div>
<div class="a " style="left:839px;top:63px;width:183px;height:18px;background:linear-gradient(#FDFDFB,#F1EFE6);border-radius:3px 3px 0 0;border-bottom:1px solid #E2DFD2"></div>
<div class="a t" style="left:841px;top:66px;">Categories Bar</div>
<svg class="a" style="left:983px;top:67px" width="10" height="10" viewBox="0 0 10 10"><rect x=".5" y=".5" width="9" height="9" rx="1.5" fill="#3C78E0" stroke="#2050B0"/><rect x="3" y="3" width="4" height="4" fill="none" stroke="#fff" stroke-width="1.2"/></svg>
<svg class="a" style="left:996px;top:67px" width="10" height="10" viewBox="0 0 10 10"><path d="M2 1 H8 M3.5 1 V5.5 M6.5 1 V5.5 M1 5.5 H9 M5 5.5 V10" fill="none" stroke="#2A4A98" stroke-width="1.3"/></svg>
<svg class="a" style="left:1009px;top:67px" width="10" height="10" viewBox="0 0 10 10"><rect x=".5" y=".5" width="9" height="9" rx="1" fill="#D84A30" stroke="#B83018"/><path d="M2.2 2.2 L7.8 7.8 M7.8 2.2 L2.2 7.8" stroke="#FFF0E8" stroke-width="1.8"/></svg>
<div class="a " style="left:839px;top:81px;width:183px;height:23px;background:linear-gradient(#F7F6F0,#E9E6D8)"></div>
<div class="a grip" style="left:842px;top:87px;width:2px;height:14px;"></div>
<svg class="a" style="left:850px;top:88px" width="14" height="13" viewBox="0 0 14 13"><rect x=".5" y="2.5" width="12" height="9" fill="#F4F6FB" stroke="none"/><path d="M1 3.5 H8" stroke="#3C7CD0" stroke-width="1.4"/><path d="M1 11.5 H12" stroke="#2A3A70" stroke-width="1.2"/><path d="M8 3.5 H12 M10 1.5 L12.5 3.5 L10 5.5" fill="none" stroke="#30A030" stroke-width="1.5"/></svg>
<svg class="a" style="left:868px;top:87px" width="14" height="14" viewBox="0 0 14 14"><rect x="1" y="3" width="3" height="2" fill="#5078C8"/><rect x="3" y="6" width="7" height="3" fill="#4A70C0"/><rect x="3" y="10" width="7" height="3" fill="#4A70C0"/><path d="M2 5 V12 H3" fill="none" stroke="#4A70C0"/><rect x="4" y="7" width="5" height="1" fill="#A8C8F0"/><rect x="4" y="11" width="5" height="1" fill="#A8C8F0"/><path d="M11 0.5 V5.5 M8.5 3 H13.5" stroke="#30A030" stroke-width="1.6"/></svg>
<svg class="a" style="left:887px;top:88px" width="14" height="13" viewBox="0 0 14 13"><rect x=".5" y="2.5" width="12" height="9" fill="#F4F6FB" stroke="none"/><path d="M1 3.5 H8" stroke="#3C7CD0" stroke-width="1.4"/><path d="M1 11.5 H12" stroke="#2A3A70" stroke-width="1.2"/><path d="M4 9 L11 2 L12.5 3.5 L5.5 10.5 Z" fill="#E0A050" stroke="#905020" stroke-width=".7"/></svg>
<svg class="a" style="left:906px;top:88px" width="14" height="13" viewBox="0 0 14 13"><rect x=".5" y="2.5" width="12" height="9" fill="#F4F6FB" stroke="none"/><path d="M1 3.5 H8" stroke="#3C7CD0" stroke-width="1.4"/><path d="M1 11.5 H12" stroke="#2A3A70" stroke-width="1.2"/><path d="M7 6 L12 11 M12 6 L7 11" stroke="#E03020" stroke-width="1.5"/></svg>
<div class="a dd" style="left:925px;top:98px;width:0px;height:0px;"></div>
<div class="a " style="left:839px;top:104px;width:183px;height:310px;background:#fff;border:1px solid #B4BCC6;border-top-color:#A4A8AC;border-bottom:2px solid #A4A8AC"></div>
<div class="a " style="left:840px;top:105px;width:181px;height:16px;background:linear-gradient(#F4F3EC,#E9E7D9);border-bottom:1px solid #D8D5C6"></div>
<div class="a " style="left:970px;top:106px;width:1px;height:14px;background:#D2CFC0"></div>
<div class="a " style="left:1001px;top:106px;width:1px;height:14px;background:#D2CFC0"></div>
<div class="a t" style="left:976px;top:107px;">Un...</div>
<div class="a t" style="left:1005px;top:107px;">T...</div>
<div class="a " style="left:846px;top:126px;width:1px;height:60px;background:#DDE0E3"></div>
<div class="a " style="left:847px;top:128px;width:7px;height:1px;background:#DDE0E3"></div>
<div class="a " style="left:854px;top:121px;width:168px;height:14px;border:1px solid #333;background:linear-gradient(90deg,#fff 0,#fff 70%,#E4E1D2 70%)"></div>
<svg class="a" style="left:857px;top:122px" width="12" height="13" viewBox="0 0 12 13"><rect x="0" y="1" width="3" height="11" fill="#B84050"/><rect x="0" y="1" width="1" height="11" fill="#E08090"/><rect x="3.5" y="1.5" width="7" height="10" fill="#fff" stroke="#808080"/><path d="M5 0 V3 M8 0 V3" stroke="#606060" stroke-width="1"/><path d="M8.5 4.5 Q6 4 6.2 6 Q6.5 7 8 7.5 Q9 8.5 7.5 9 Q6 9 6 8.5" fill="none" stroke="#202020" stroke-width="1.1"/></svg>
<div class="a t" style="left:872px;top:122px;width:111.4px;overflow:hidden">One To Two Months Befo</div>
<div class="a t" style="left:975px;top:122px;width:28.4px;text-align:right">8</div>
<div class="a t" style="left:1000px;top:122px;width:22.7px;text-align:right">8</div>
<div class="a " style="left:847px;top:142px;width:7px;height:1px;background:#DDE0E3"></div>
<svg class="a" style="left:857px;top:136px" width="12" height="13" viewBox="0 0 12 13"><rect x="0" y="1" width="3" height="11" fill="#B84050"/><rect x="0" y="1" width="1" height="11" fill="#E08090"/><rect x="3.5" y="1.5" width="7" height="10" fill="#fff" stroke="#808080"/><path d="M5 0 V3 M8 0 V3" stroke="#606060" stroke-width="1"/><path d="M8.5 4.5 Q6 4 6.2 6 Q6.5 7 8 7.5 Q9 8.5 7.5 9 Q6 9 6 8.5" fill="none" stroke="#202020" stroke-width="1.1"/></svg>
<div class="a t" style="left:872px;top:136px;width:111.4px;overflow:hidden">Two To Three Weeks Bef­</div>
<div class="a t" style="left:975px;top:136px;width:28.4px;text-align:right">12</div>
<div class="a t" style="left:1000px;top:136px;width:22.7px;text-align:right">12</div>
<div class="a " style="left:847px;top:157px;width:7px;height:1px;background:#DDE0E3"></div>
<svg class="a" style="left:857px;top:151px" width="12" height="13" viewBox="0 0 12 13"><rect x="0" y="1" width="3" height="11" fill="#B84050"/><rect x="0" y="1" width="1" height="11" fill="#E08090"/><rect x="3.5" y="1.5" width="7" height="10" fill="#fff" stroke="#808080"/><path d="M5 0 V3 M8 0 V3" stroke="#606060" stroke-width="1"/><path d="M8.5 4.5 Q6 4 6.2 6 Q6.5 7 8 7.5 Q9 8.5 7.5 9 Q6 9 6 8.5" fill="none" stroke="#202020" stroke-width="1.1"/></svg>
<div class="a t" style="left:872px;top:151px;width:111.4px;overflow:hidden">One Week Before the Par</div>
<div class="a t" style="left:975px;top:151px;width:28.4px;text-align:right">11</div>
<div class="a t" style="left:1000px;top:151px;width:22.7px;text-align:right">11</div>
<div class="a " style="left:847px;top:171px;width:7px;height:1px;background:#DDE0E3"></div>
<svg class="a" style="left:857px;top:165px" width="12" height="13" viewBox="0 0 12 13"><rect x="0" y="1" width="3" height="11" fill="#B84050"/><rect x="0" y="1" width="1" height="11" fill="#E08090"/><rect x="3.5" y="1.5" width="7" height="10" fill="#fff" stroke="#808080"/><path d="M5 0 V3 M8 0 V3" stroke="#606060" stroke-width="1"/><path d="M8.5 4.5 Q6 4 6.2 6 Q6.5 7 8 7.5 Q9 8.5 7.5 9 Q6 9 6 8.5" fill="none" stroke="#202020" stroke-width="1.1"/></svg>
<div class="a t" style="left:872px;top:165px;width:111.4px;overflow:hidden">One Day Before the Party</div>
<div class="a t" style="left:975px;top:165px;width:28.4px;text-align:right">13</div>
<div class="a t" style="left:1000px;top:165px;width:22.7px;text-align:right">13</div>
<div class="a " style="left:847px;top:185px;width:7px;height:1px;background:#DDE0E3"></div>
<svg class="a" style="left:857px;top:179px" width="12" height="13" viewBox="0 0 12 13"><rect x="0" y="1" width="3" height="11" fill="#B84050"/><rect x="0" y="1" width="1" height="11" fill="#E08090"/><rect x="3.5" y="1.5" width="7" height="10" fill="#fff" stroke="#808080"/><path d="M5 0 V3 M8 0 V3" stroke="#606060" stroke-width="1"/><path d="M8.5 4.5 Q6 4 6.2 6 Q6.5 7 8 7.5 Q9 8.5 7.5 9 Q6 9 6 8.5" fill="none" stroke="#202020" stroke-width="1.1"/></svg>
<div class="a t" style="left:872px;top:179px;width:111.4px;overflow:hidden">The Day of the Party</div>
<div class="a t" style="left:975px;top:179px;width:28.4px;text-align:right">17</div>
<div class="a t" style="left:1000px;top:179px;width:22.7px;text-align:right">17</div>
<div class="a " style="left:838px;top:417px;width:185px;height:361px;background:#ECE9D8;border:1px solid #C4C1B2;border-radius:3px 3px 0 0"></div>
<div class="a " style="left:839px;top:418px;width:183px;height:17px;background:linear-gradient(#FDFDFB,#F1EFE6);border-radius:3px 3px 0 0;border-bottom:1px solid #E2DFD2"></div>
<div class="a t" style="left:841px;top:421px;">Filters Bar</div>
<svg class="a" style="left:983px;top:422px" width="10" height="10" viewBox="0 0 10 10"><rect x=".5" y=".5" width="9" height="9" rx="1.5" fill="#3C78E0" stroke="#2050B0"/><rect x="3" y="3" width="4" height="4" fill="none" stroke="#fff" stroke-width="1.2"/></svg>
<svg class="a" style="left:996px;top:422px" width="10" height="10" viewBox="0 0 10 10"><path d="M2 1 H8 M3.5 1 V5.5 M6.5 1 V5.5 M1 5.5 H9 M5 5.5 V10" fill="none" stroke="#2A4A98" stroke-width="1.3"/></svg>
<svg class="a" style="left:1009px;top:422px" width="10" height="10" viewBox="0 0 10 10"><rect x=".5" y=".5" width="9" height="9" rx="1" fill="#D84A30" stroke="#B83018"/><path d="M2.2 2.2 L7.8 7.8 M7.8 2.2 L2.2 7.8" stroke="#FFF0E8" stroke-width="1.8"/></svg>
<div class="a " style="left:839px;top:435px;width:183px;height:24px;background:linear-gradient(#F7F6F0,#E9E6D8)"></div>
<div class="a grip" style="left:842px;top:441px;width:2px;height:14px;"></div>
<div class="a " style="left:847px;top:440px;width:73px;height:16px;background:#EDEBE2;border:1px solid #B8BEC8"></div>
<div class="a t" style="left:850px;top:442px;color:#ADAA9C">Custom</div>
<div class="a " style="left:905px;top:441px;width:14px;height:14px;background:#E8E6DE"></div>
<svg class="a" style="left:908px;top:445px" width="8" height="6" viewBox="0 0 8 6"><path d="M1 1 L4 4 L7 1" fill="none" stroke="#C0BDB0" stroke-width="1.4"/></svg>
<svg class="a" style="left:924px;top:441px" width="15" height="15" viewBox="0 0 15 15"><path d="M2 9 Q1 13 5 13 L7 11" fill="none" stroke="#7C8CD8" stroke-width="1.8"/><path d="M5 10 L11 3 L13 5 L7 12 Z" fill="#50B050" stroke="#2A7A2A" stroke-width=".7"/><circle cx="11" cy="4" r="3" fill="none" stroke="#90B0E0" stroke-width="1.2"/></svg>
<div class="a dd" style="left:940px;top:446px;width:0px;height:0px;"></div>
<svg class="a" style="left:950px;top:441px" width="15" height="14" viewBox="0 0 15 14"><path d="M2 10 L8 2 Q10 0 12 2 L13 3 Q14 5 12 7 L7 12 H3 Z" fill="#F4F4F2" stroke="#9A9890" stroke-width="1"/><path d="M4 12 H14" stroke="#9A9890" stroke-width="1"/></svg>
<svg class="a" style="left:972px;top:443px" width="12" height="12" viewBox="0 0 12 12"><path d="M1.5 1.5 L10.5 10.5 M10.5 1.5 L1.5 10.5" stroke="#BDBAB0" stroke-width="2.6" stroke-linecap="round"/></svg>
<div class="a dd" style="left:988px;top:451px;width:0px;height:0px;"></div>
<div class="a " style="left:839px;top:459px;width:183px;height:319px;background:#ECE9D8;border:1px solid #A0A8B0;border-bottom:1px solid #B4B0A0"></div>
<div class="a " style="left:918px;top:460px;width:1px;height:151px;background:#C9C5B5"></div>
<div class="a " style="left:840px;top:477px;width:181px;height:1px;background:#D6D2C2"></div>
<div class="a t" style="left:852px;top:463px;width:73.9px;overflow:hidden">Completion</div>
<div class="a hdd" style="left:1007px;top:462px;width:12px;height:13px;"></div>
<div class="a " style="left:840px;top:494px;width:181px;height:1px;background:#D6D2C2"></div>
<div class="a t" style="left:852px;top:480px;width:73.9px;overflow:hidden">Due Date</div>
<div class="a hdd" style="left:1007px;top:479px;width:12px;height:13px;"></div>
<div class="a " style="left:840px;top:510px;width:181px;height:1px;background:#D6D2C2"></div>
<div class="a t" style="left:852px;top:497px;width:73.9px;overflow:hidden">Status</div>
<div class="a hdd" style="left:1007px;top:496px;width:12px;height:13px;"></div>
<div class="a " style="left:840px;top:527px;width:181px;height:1px;background:#D6D2C2"></div>
<div class="a t" style="left:852px;top:513px;width:73.9px;overflow:hidden">Priority</div>
<div class="a hdd" style="left:1007px;top:512px;width:12px;height:13px;"></div>
<div class="a " style="left:840px;top:544px;width:181px;height:1px;background:#D6D2C2"></div>
<div class="a t" style="left:852px;top:530px;width:73.9px;overflow:hidden">Task Name</div>
<div class="a " style="left:840px;top:561px;width:181px;height:1px;background:#D6D2C2"></div>
<div class="a t" style="left:852px;top:547px;width:73.9px;overflow:hidden">Date Created</div>
<div class="a hdd" style="left:1007px;top:546px;width:12px;height:13px;"></div>
<div class="a " style="left:840px;top:577px;width:181px;height:1px;background:#D6D2C2"></div>
<div class="a t" style="left:852px;top:564px;width:73.9px;overflow:hidden">Date Last Modifi</div>
<div class="a hdd" style="left:1007px;top:563px;width:12px;height:13px;"></div>
<div class="a " style="left:840px;top:594px;width:181px;height:1px;background:#D6D2C2"></div>
<div class="a t" style="left:852px;top:580px;width:73.9px;overflow:hidden">Date Opened</div>
<div class="a hdd" style="left:1007px;top:579px;width:12px;height:13px;"></div>
<div class="a " style="left:840px;top:611px;width:181px;height:1px;background:#D6D2C2"></div>
<div class="a t" style="left:852px;top:597px;width:73.9px;overflow:hidden">Date Completed</div>
<div class="a hdd" style="left:1007px;top:596px;width:12px;height:13px;"></div>
<div class="a " style="left:2px;top:649px;width:834px;height:130px;background:#ECE9D8"></div>
<div class="a " style="left:3px;top:650px;width:832px;height:17px;background:linear-gradient(#FDFDFB,#F1EFE6);border-radius:3px 3px 0 0;border-bottom:1px solid #E2DFD2"></div>
<div class="a t" style="left:5px;top:653px;">Note</div>
<svg class="a" style="left:809px;top:654px" width="10" height="10" viewBox="0 0 10 10"><path d="M2 1 H8 M3.5 1 V5.5 M6.5 1 V5.5 M1 5.5 H9 M5 5.5 V10" fill="none" stroke="#2A4A98" stroke-width="1.3"/></svg>
<svg class="a" style="left:822px;top:654px" width="10" height="10" viewBox="0 0 10 10"><rect x=".5" y=".5" width="9" height="9" rx="1" fill="#D84A30" stroke="#B83018"/><path d="M2.2 2.2 L7.8 7.8 M7.8 2.2 L2.2 7.8" stroke="#FFF0E8" stroke-width="1.8"/></svg>
<div class="a " style="left:3px;top:667px;width:833px;height:24px;background:linear-gradient(#F7F6F0,#E9E6D8)"></div>
<div class="a grip" style="left:6px;top:673px;width:2px;height:15px;"></div>
<svg class="a" style="left:12px;top:672px" width="15" height="15" viewBox="0 0 15 15"><path d="M3 12 Q1 10 3 8 L5 6" fill="none" stroke="#B8B8B0" stroke-width="2"/><path d="M6 9 L10 4 Q12 2 13 4 Q14 6 12 8 L9 11" fill="none" stroke="#A8A8A0" stroke-width="2"/></svg>
<div class="a sep" style="left:33px;top:671px;width:2px;height:16px;"></div>
<svg class="a" style="left:40px;top:673px" width="13" height="13" viewBox="0 0 13 13"><g opacity=".65"><rect x="0.5" y="0.5" width="10" height="12" fill="#EEF3FA" stroke="#8EA2C8"/><rect x="2" y="3" width="6" height="6" fill="#A8C8F0"/><path d="M8 1 L11 1 L11 12 L8 12" fill="#F0D0A0" stroke="#C09060" stroke-width=".8"/></g></svg>
<svg class="a" style="left:58px;top:673px" width="12" height="13" viewBox="0 0 12 13"><g opacity=".65"><rect x="2.5" y="0.5" width="7" height="4" fill="#fff" stroke="#8090B0"/><rect x="0.5" y="4.5" width="11" height="5" rx="1" fill="#C8D0E0" stroke="#5A6A90"/><rect x="2.5" y="8.5" width="7" height="4" fill="#fff" stroke="#8090B0"/><line x1="1" y1="6.5" x2="11" y2="6.5" stroke="#3A4A78"/></g></svg>
<div class="a sep" style="left:77px;top:671px;width:2px;height:16px;"></div>
<div class="a " style="left:83px;top:673px;width:12px;height:12px;background:linear-gradient(135deg,#D8E6FA,#A8C4F0);border:1px solid #6C98D8;border-radius:2px"></div>
<div class="a" style="left:83px;top:673px;width:12px;text-align:center;font-size:9px;font-weight:bold;color:#2C5CB8;line-height:12px">B</div>
<div class="a " style="left:99px;top:670px;width:19px;height:20px;border:1px solid #A0B4D4;border-radius:2px;background:#FAFBFD"></div>
<div class="a " style="left:103px;top:674px;width:12px;height:12px;background:linear-gradient(135deg,#D8E6FA,#A8C4F0);border:1px solid #3C68B8;border-radius:2px"></div>
<div class="a" style="left:103px;top:674px;width:12px;text-align:center;font-size:9px;font-weight:bold;font-style:italic;color:#1C3C98;line-height:12px">I</div>
<div class="a " style="left:121px;top:673px;width:12px;height:12px;background:linear-gradient(135deg,#D8E6FA,#A8C4F0);border:1px solid #8CB0E8;border-radius:2px"></div>
<div class="a" style="left:121px;top:673px;width:12px;text-align:center;font-size:8px;color:#5C8CD8;line-height:12px">U</div>
<div class="a sep" style="left:139px;top:671px;width:2px;height:16px;"></div>
<div class="a " style="left:142px;top:672px;width:74px;height:16px;background:#fff"></div>
<svg class="a" style="left:144px;top:673px" width="11" height="12" viewBox="0 0 11 12"><path d="M0.5 1 H7.5 M4 1 V10 M2.5 10 H5.5" stroke="#000" stroke-width="1.5" fill="none"/><path d="M4.5 4.5 H10.5 M7.5 4.5 V11 M6 11 H9" stroke="#000" stroke-width="1.2" fill="none"/></svg>
<div class="a t" style="left:155px;top:674px;">Tahoma</div>
<div class="a hdd" style="left:205px;top:674px;width:11px;height:12px;"></div>
<div class="a " style="left:218px;top:672px;width:74px;height:16px;background:#fff"></div>
<div class="a t" style="left:219px;top:674px;transform:scaleX(.765)">DEFAULT_CHAR</div>
<div class="a hdd" style="left:281px;top:674px;width:11px;height:12px;"></div>
<div class="a " style="left:296px;top:674px;width:21px;height:12px;background:#000"></div>
<div class="a " style="left:296px;top:672px;width:76px;height:16px;background:transparent"></div>
<div class="a" style="left:317px;top:672px;width:44px;height:16px;background:#fff"></div>
<div class="a t" style="left:318px;top:674px;">Black</div>
<div class="a hdd" style="left:361px;top:674px;width:11px;height:12px;"></div>
<svg class="a" style="left:377px;top:673px" width="13" height="13" viewBox="0 0 13 13"><rect x=".5" y=".5" width="12" height="12" rx="1" fill="#E4F0F8" stroke="#7CA8C8"/><path d="M2.5 10 L5 3 L7.5 10 M3.5 7.5 H6.5" fill="none" stroke="#3A9A5A" stroke-width="1"/><path d="M9.5 3 V6 M8 4.5 H11" stroke="#D04040" stroke-width="1"/></svg>
<svg class="a" style="left:396px;top:673px" width="13" height="13" viewBox="0 0 13 13"><rect x=".5" y=".5" width="12" height="12" rx="1" fill="#E4F0F8" stroke="#7CA8C8"/><path d="M2.5 10 L5 3 L7.5 10 M3.5 7.5 H6.5" fill="none" stroke="#3A9A5A" stroke-width="1"/><path d="M8 4.5 H11 M8 8 H11" stroke="#D04040" stroke-width="1"/></svg>
<div class="a " style="left:412px;top:672px;width:27px;height:16px;background:#fff"></div>
<div class="a hdd" style="left:428px;top:674px;width:11px;height:12px;"></div>
<div class="a sep" style="left:443px;top:671px;width:2px;height:16px;"></div>
<svg class="a" style="left:450px;top:673px" width="13" height="13" viewBox="0 0 13 13"><rect x=".5" y=".5" width="12" height="12" rx="1" fill="#DFF2E6" stroke="#7CB8A8"/><path d="M3 3.5 H8 M3 5.5 H10 M3 7.5 H8 M3 9.5 H10" stroke="#3A9A5A" stroke-width="1"/></svg>
<svg class="a" style="left:469px;top:673px" width="13" height="13" viewBox="0 0 13 13"><rect x=".5" y=".5" width="12" height="12" rx="1" fill="#DFF2E6" stroke="#7CB8A8"/><path d="M3.5 3.5 H9.5 M2.5 5.5 H10.5 M3.5 7.5 H9.5 M2.5 9.5 H10.5" stroke="#3A9A5A" stroke-width="1"/></svg>
<svg class="a" style="left:488px;top:673px" width="13" height="13" viewBox="0 0 13 13"><rect x=".5" y=".5" width="12" height="12" rx="1" fill="#DFF2E6" stroke="#7CB8A8"/><path d="M5 3.5 H10 M3 5.5 H10 M5 7.5 H10 M3 9.5 H10" stroke="#3A9A5A" stroke-width="1"/></svg>
<svg class="a" style="left:507px;top:672px" width="14" height="14" viewBox="0 0 14 14"><circle cx="2" cy="2.5" r="1.6" fill="#3050A0"/><circle cx="2" cy="6.5" r="1.6" fill="#3050A0"/><circle cx="2" cy="10.5" r="1.6" fill="#3050A0"/><path d="M5 2.5 H13 M5 6.5 H13 M5 10.5 H13" stroke="#3A8A4A" stroke-width="1.6"/></svg>
<div class="a dd" style="left:525px;top:684px;width:0px;height:0px;"></div>
<div class="a " style="left:2px;top:691px;width:834px;height:63px;background:#fff;border:1px solid #98AEC8;border-right-color:#B0BAC4"></div>
<div class="a" style="left:24px;top:694px;font-family:'Liberation Serif';font-style:italic;font-size:13px;white-space:nowrap;line-height:15px;letter-spacing:-0.1px">If the party is not at the hotel or restaurant, order chairs, tables, linens, plates and dishes, cups, napkins, tablecloths&nbsp; and other utensils</div>
<div class="a " style="left:2px;top:754px;width:834px;height:25px;background:linear-gradient(#F6F5F1,#F2F0EA);border-bottom:1px solid #B8B4A4;border-left:1px solid #C8C8C0;border-right:1px solid #B8BCC0"></div>
<div class="a " style="left:3px;top:757px;width:833px;height:1px;background:#C4C0B0"></div>
<div class="a " style="left:5px;top:756px;width:26px;height:20px;background:#fff;border-left:1px solid #D0CDC0;border-bottom:2px solid #E8A030"></div>
<div class="a t" style="left:8px;top:760px;">Note</div>
<div class="a " style="left:31px;top:757px;width:56px;height:19px;background:#FBFAF8;border:1px solid #C8C5B8;border-top:0;border-radius:0 0 2px 2px"></div>
<div class="a t" style="left:33px;top:760px;letter-spacing:-0.5px">Search result</div>
<div class="a " style="left:0px;top:779px;width:1024px;height:16px;background:linear-gradient(#F2F0E8,#E8E5D6)"></div>
</div></body></html>
